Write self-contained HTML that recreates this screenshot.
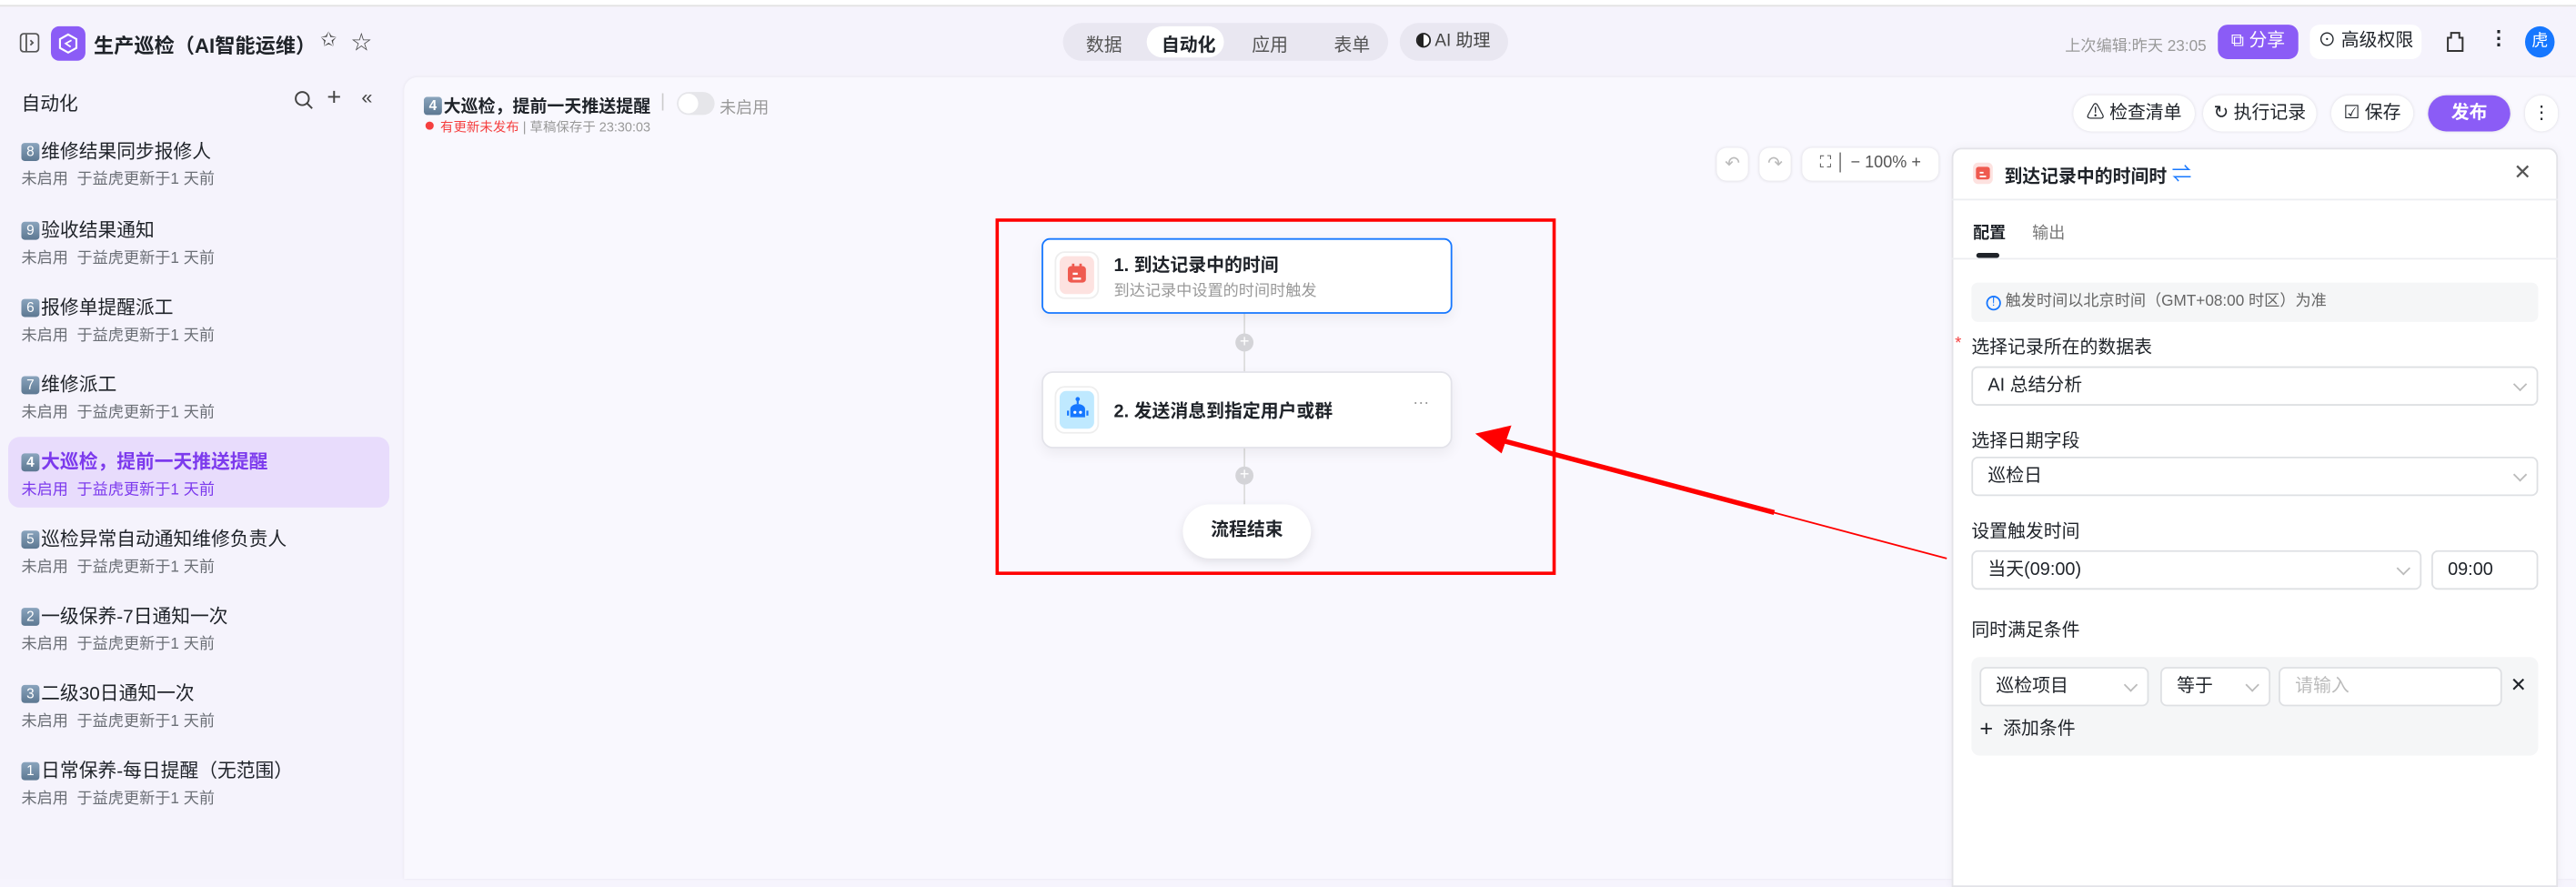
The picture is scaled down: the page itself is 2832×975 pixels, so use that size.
<!DOCTYPE html>
<html><head><meta charset="utf-8"><style>
*{box-sizing:border-box;margin:0;padding:0}
html,body{width:2832px;height:966px;overflow:hidden;background:#f6f4fd}
#w{position:absolute;left:0;top:0;width:1568px;height:535px;transform:scale(1.8061,1.8056);transform-origin:0 0;font-family:"Liberation Sans","Noto Sans CJK SC",sans-serif;color:#1f2329;background:#f5f3fc}
.a{position:absolute;white-space:nowrap}
.btn{position:absolute;height:22px;border-radius:11px;background:#fff;box-shadow:0 0 2px rgba(0,0,0,.12);font-size:11px;line-height:22px;text-align:center;color:#1f2329}
.it .t{position:absolute;left:13px;font-size:11.5px}
.it .s{position:absolute;left:13px;font-size:9.5px;color:#6b6f76}
.num{display:inline-block;width:11px;height:11px;border-radius:2px;background:linear-gradient(#8aa4bd,#5d7892);color:#fff;font-size:8.5px;line-height:11px;text-align:center;vertical-align:1px;margin-right:1px}
.sel{position:absolute;height:24px;border:1px solid #dee0e3;border-radius:4px;background:#fff;font-size:11px;line-height:22px;padding-left:9px}
.chev{position:absolute;right:7px;top:7px;width:6px;height:6px;border-right:1px solid #bbb;border-bottom:1px solid #bbb;transform:rotate(45deg)}
.lbl{position:absolute;left:1200px;font-size:11px}
</style></head><body><div id="w">
<div class="a" style="left:0;top:0;width:1568px;height:4px;background:#fff;border-bottom:1px solid #e2e2e2"></div>
<svg class="a" style="left:12px;top:20px" width="12" height="12" viewBox="0 0 12 12"><rect x=".5" y=".5" width="11" height="11" rx="2" fill="none" stroke="#555"/><line x1="4" y1="1" x2="4" y2="11" stroke="#555"/><path d="M6.5 4.5L8 6 6.5 7.5" fill="none" stroke="#555"/></svg>
<div class="a" style="left:31px;top:16px;width:21px;height:21px;border-radius:5px;background:#8b5cf6"></div>
<svg class="a" style="left:35px;top:20px" width="13" height="13" viewBox="0 0 13 13"><path d="M6.5 1L11.5 3.8V9.2L6.5 12 1.5 9.2V3.8Z" fill="none" stroke="#fff" stroke-width="1.2"/><path d="M8.5 4.5L5 6.5 8 8.5" fill="none" stroke="#fff"/></svg>
<div class="a" style="left:57px;top:18px;font-size:12.3px;font-weight:bold">生产巡检（AI智能运维）</div>
<div class="a" style="left:195px;top:17px;font-size:12px;color:#444">✩</div>
<div class="a" style="left:214px;top:17px;font-size:12px;color:#444">☆</div>
<div class="a" style="left:647px;top:14px;width:198px;height:23px;border-radius:12px;background:#e9e7f1"></div>
<div class="a" style="left:698px;top:16px;width:47px;height:19px;border-radius:10px;background:#fff"></div>
<div class="a" style="left:661px;top:19px;font-size:11px;color:#555">数据</div>
<div class="a" style="left:707px;top:19px;font-size:11px;font-weight:bold">自动化</div>
<div class="a" style="left:762px;top:19px;font-size:11px;color:#555">应用</div>
<div class="a" style="left:812px;top:19px;font-size:11px;color:#555">表单</div>
<div class="a" style="left:852px;top:14px;width:66px;height:23px;border-radius:12px;background:#e9e7f1;font-size:10.5px;line-height:23px;padding-left:10px;color:#444"><span style="display:inline-block;width:9px;height:9px;border-radius:50%;border:1.3px solid #222;background:linear-gradient(90deg,#222 50%,#fff 50%);vertical-align:-1px"></span> AI 助理</div>
<div class="a" style="left:1257px;top:20px;font-size:9.5px;color:#999">上次编辑:昨天 23:05</div>
<div class="a" style="left:1350px;top:15px;width:49px;height:21px;border-radius:6px;background:#8b5cf6;color:#fff;font-size:11px;line-height:21px;text-align:center">⧉ 分享</div>
<div class="a" style="left:1406px;top:15px;width:68px;height:21px;border-radius:6px;background:#fff;font-size:11px;line-height:21px;text-align:center">⊙ 高级权限</div>
<svg class="a" style="left:1489px;top:19px" width="11" height="13" viewBox="0 0 11 13"><path d="M3 1H8V4H10V12H1V4H3Z" fill="none" stroke="#333" stroke-width="1.1"/></svg>
<div class="a" style="left:1515px;top:16px;font-size:12px;font-weight:bold">⋮</div>
<div class="a" style="left:1537px;top:16px;width:18px;height:19px;border-radius:50%;background:#1677ff;color:#fff;font-size:10px;line-height:19px;text-align:center">虎</div>
<div class="a" style="left:13px;top:55px;font-size:11.5px">自动化</div>
<svg class="a" style="left:179px;top:55px" width="12" height="12" viewBox="0 0 12 12"><circle cx="5" cy="5" r="4" fill="none" stroke="#444" stroke-width="1.1"/><line x1="8" y1="8" x2="11" y2="11" stroke="#444" stroke-width="1.1"/></svg>
<div class="a" style="left:199px;top:51px;font-size:15px;color:#444">+</div>
<div class="a" style="left:220px;top:52px;font-size:12px;color:#444">«</div>
<div class="a" style="left:5px;top:266px;width:232px;height:43px;border-radius:7px;background:#e8dcfc"></div>
<div class="it">
<div class="t" style="top:84px"><span class="num">8</span>维修结果同步报修人</div><div class="s" style="top:101px">未启用 &nbsp;于益虎更新于1 天前</div>
<div class="t" style="top:132px"><span class="num">9</span>验收结果通知</div><div class="s" style="top:149px">未启用 &nbsp;于益虎更新于1 天前</div>
<div class="t" style="top:179px"><span class="num">6</span>报修单提醒派工</div><div class="s" style="top:196px">未启用 &nbsp;于益虎更新于1 天前</div>
<div class="t" style="top:226px"><span class="num">7</span>维修派工</div><div class="s" style="top:243px">未启用 &nbsp;于益虎更新于1 天前</div>
<div class="t" style="top:273px;color:#7c3aed;font-weight:bold"><span class="num">4</span>大巡检，提前一天推送提醒</div><div class="s" style="top:290px;color:#7c3aed">未启用 &nbsp;于益虎更新于1 天前</div>
<div class="t" style="top:320px"><span class="num">5</span>巡检异常自动通知维修负责人</div><div class="s" style="top:337px">未启用 &nbsp;于益虎更新于1 天前</div>
<div class="t" style="top:367px"><span class="num">2</span>一级保养-7日通知一次</div><div class="s" style="top:384px">未启用 &nbsp;于益虎更新于1 天前</div>
<div class="t" style="top:414px"><span class="num">3</span>二级30日通知一次</div><div class="s" style="top:431px">未启用 &nbsp;于益虎更新于1 天前</div>
<div class="t" style="top:461px"><span class="num">1</span>日常保养-每日提醒（无范围）</div><div class="s" style="top:478px">未启用 &nbsp;于益虎更新于1 天前</div>
</div>
<div class="a" style="left:246px;top:47px;width:1322px;height:488px;background:#f9f8fe;border-top-left-radius:8px;box-shadow:0 0 2px rgba(0,0,0,.06)"></div>
<div class="a" style="left:258px;top:57px;font-size:10.5px;font-weight:bold"><span class="num">4</span>大巡检，提前一天推送提醒</div>
<div class="a" style="left:402px;top:56px;font-size:11px;color:#ccc">|</div>
<div class="a" style="left:412px;top:56px;width:23px;height:14px;border-radius:7px;background:#e6e6ea"><div style="position:absolute;left:1px;top:1px;width:12px;height:12px;border-radius:50%;background:#fff"></div></div>
<div class="a" style="left:438px;top:57px;font-size:10px;color:#999">未启用</div>
<div class="a" style="left:259px;top:74px;width:5px;height:5px;border-radius:50%;background:#f53f3f"></div>
<div class="a" style="left:268px;top:72px;font-size:8px;color:#f53f3f">有更新未发布 <span style="color:#999">| 草稿保存于 23:30:03</span></div>
<div class="btn" style="left:1262px;top:58px;width:74px">⚠ 检查清单</div>
<div class="btn" style="left:1341px;top:58px;width:69px">↻ 执行记录</div>
<div class="btn" style="left:1419px;top:58px;width:50px">☑ 保存</div>
<div class="btn" style="left:1478px;top:58px;width:50px;background:#8b5cf6;color:#fff;font-weight:bold">发布</div>
<div class="btn" style="left:1537px;top:58px;width:20px">⋮</div>
<div class="btn" style="left:1045px;top:90px;width:19px;height:20px;border-radius:6px;color:#bbb;line-height:20px">↶</div>
<div class="btn" style="left:1071px;top:90px;width:19px;height:20px;border-radius:6px;color:#bbb;line-height:20px">↷</div>
<div class="btn" style="left:1097px;top:90px;width:83px;height:20px;border-radius:6px;line-height:20px;font-size:10px;color:#555">⛶ │ − 100% +</div>
<div class="a" style="left:606px;top:133px;width:341px;height:217px;border:2px solid #f00"></div>
<div class="a" style="left:757px;top:190px;width:1px;height:117px;background:#ddd"></div>
<div class="a" style="left:752px;top:203px;width:11px;height:11px;border-radius:50%;background:#d4d4d8;color:#fff;font-size:10px;line-height:11px;text-align:center">+</div>
<div class="a" style="left:752px;top:284px;width:11px;height:11px;border-radius:50%;background:#d4d4d8;color:#fff;font-size:10px;line-height:11px;text-align:center">+</div>
<div class="a" style="left:634px;top:145px;width:250px;height:46px;border:1.5px solid #1677ff;border-radius:5px;background:#fff;box-shadow:0 3px 8px rgba(0,0,0,.06)"></div>
<div class="a" style="left:642px;top:153px;width:27px;height:29px;border:1px solid #eee;border-radius:6px;background:#fff"></div>
<div class="a" style="left:645px;top:156px;width:21px;height:23px;border-radius:4px;background:#fde2e0"></div>
<svg class="a" style="left:649px;top:160px" width="13" height="13" viewBox="0 0 13 13"><rect x="1" y="2" width="11" height="10" rx="2" fill="#ef5a4f"/><rect x="3.5" y="0.5" width="1.5" height="3" fill="#ef5a4f"/><rect x="8" y="0.5" width="1.5" height="3" fill="#ef5a4f"/><rect x="4" y="6" width="3" height="1.3" fill="#fff"/><rect x="4" y="9" width="5" height="1.3" fill="#fff"/></svg>
<div class="a" style="left:678px;top:153px;font-size:11px;font-weight:bold">1. 到达记录中的时间</div>
<div class="a" style="left:678px;top:169px;font-size:9.5px;color:#999">到达记录中设置的时间时触发</div>
<div class="a" style="left:634px;top:226px;width:250px;height:47px;border:1px solid #e3e3ea;border-radius:7px;background:#fff;box-shadow:0 3px 8px rgba(0,0,0,.06)"></div>
<div class="a" style="left:642px;top:235px;width:27px;height:29px;border:1px solid #eee;border-radius:6px;background:#fff"></div>
<div class="a" style="left:645px;top:238px;width:21px;height:23px;border-radius:4px;background:#bfe9ff"></div>
<svg class="a" style="left:649px;top:241px" width="14" height="16" viewBox="0 0 14 16"><circle cx="7" cy="2" r="1.3" fill="#1677ff"/><rect x="6.4" y="2" width="1.2" height="3" fill="#1677ff"/><path d="M2.5 8a4.5 3 0 0 1 9 0V13H2.5Z" fill="#1677ff"/><rect x="0.5" y="9" width="1.2" height="3" fill="#1677ff"/><rect x="12.3" y="9" width="1.2" height="3" fill="#1677ff"/><circle cx="5.3" cy="10" r=".9" fill="#fff"/><circle cx="8.7" cy="10" r=".9" fill="#fff"/></svg>
<div class="a" style="left:678px;top:242px;font-size:11px;font-weight:bold">2. 发送消息到指定用户或群</div>
<div class="a" style="left:860px;top:240px;font-size:10px;color:#999">···</div>
<div class="a" style="left:720px;top:307px;width:78px;height:33px;border-radius:17px;background:#fff;box-shadow:0 2px 6px rgba(0,0,0,.1);font-size:11px;font-weight:bold;line-height:33px;text-align:center">流程结束</div>
<svg class="a" style="left:880px;top:250px" width="320" height="100" viewBox="0 0 320 100"><path d="M305 90L30 17" stroke="#f00" stroke-width="1"/><path d="M200 62L30 17" stroke="#f00" stroke-width="3"/><path d="M18 14L40 9 34 26Z" fill="#f00"/></svg>
<div class="a" style="left:1188px;top:90px;width:369px;height:450px;background:#fff;border:1px solid #e3e3e8;border-radius:6px 6px 0 0;box-shadow:0 0 6px rgba(0,0,0,.05)"></div>
<div class="a" style="left:1201px;top:99px;width:12px;height:13px;border-radius:3px;background:#fde2e0"></div>
<svg class="a" style="left:1202px;top:100px" width="10" height="10" viewBox="0 0 13 13"><rect x="1" y="2" width="11" height="10" rx="2" fill="#ef5a4f"/><rect x="4" y="6" width="3" height="1.3" fill="#fff"/><rect x="4" y="9" width="5" height="1.3" fill="#fff"/></svg>
<div class="a" style="left:1220px;top:99px;font-size:11px;font-weight:bold">到达记录中的时间时</div>
<div class="a" style="left:1322px;top:97px;font-size:12px;color:#1677ff">⇌</div>
<div class="a" style="left:1530px;top:97px;font-size:13px;color:#555">✕</div>
<div class="a" style="left:1188px;top:121px;width:369px;height:1px;background:#eceef1"></div>
<div class="a" style="left:1201px;top:133px;font-size:10px;font-weight:bold">配置</div>
<div class="a" style="left:1237px;top:133px;font-size:10px;color:#777">输出</div>
<div class="a" style="left:1203px;top:154px;width:14px;height:3px;border-radius:2px;background:#1f2329"></div>
<div class="a" style="left:1188px;top:157px;width:369px;height:1px;background:#eceef1"></div>
<div class="a" style="left:1200px;top:172px;width:345px;height:24px;border-radius:4px;background:#f5f6f7;font-size:9.5px;line-height:24px;padding-left:9px;color:#666"><span style="display:inline-block;width:9px;height:9px;border:1px solid #1677ff;border-radius:50%;color:#1677ff;font-size:7px;line-height:7px;text-align:center;vertical-align:0">!</span> 触发时间以北京时间（GMT+08:00 时区）为准</div>
<div class="a" style="left:1190px;top:204px;font-size:10px;color:#f53f3f">*</div>
<div class="lbl" style="top:203px">选择记录所在的数据表</div>
<div class="sel" style="left:1200px;top:223px;width:345px">AI 总结分析<div class="chev"></div></div>
<div class="lbl" style="top:260px">选择日期字段</div>
<div class="sel" style="left:1200px;top:278px;width:345px">巡检日<div class="chev"></div></div>
<div class="lbl" style="top:315px">设置触发时间</div>
<div class="sel" style="left:1200px;top:335px;width:274px">当天(09:00)<div class="chev"></div></div>
<div class="sel" style="left:1480px;top:335px;width:65px">09:00</div>
<div class="lbl" style="top:375px">同时满足条件</div>
<div class="a" style="left:1200px;top:400px;width:345px;height:60px;border-radius:5px;background:#f5f6f7"></div>
<div class="sel" style="left:1205px;top:406px;width:103px">巡检项目<div class="chev"></div></div>
<div class="sel" style="left:1315px;top:406px;width:67px">等于<div class="chev"></div></div>
<div class="sel" style="left:1387px;top:406px;width:136px;color:#bbb">请输入</div>
<div class="a" style="left:1528px;top:410px;font-size:12px">✕</div>
<div class="a" style="left:1205px;top:435px;font-size:11px"><span style="font-size:14px;vertical-align:-1px">+</span>&nbsp; 添加条件</div>
</div></body></html>
